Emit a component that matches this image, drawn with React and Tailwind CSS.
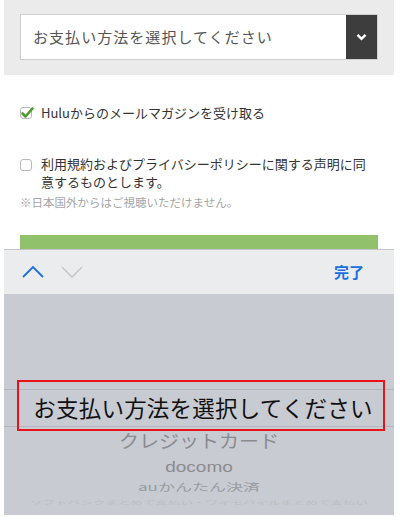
import React from 'react';

const jp = { fontFamily: '"Noto Sans CJK JP", "Noto Sans", sans-serif' };

const Box = ({ checked }) => (
  <div className="relative w-[12px] h-[12px] shrink-0 rounded-[3px] border border-[#b8b8b8] bg-white">
    {checked && (
      <svg className="absolute -left-[1px] -top-[2px]" width="15" height="14" viewBox="0 0 15 14">
        <path d="M2.5 7.5 L5.5 10.5 L12.5 2.5" fill="none" stroke="#4a9a2c" strokeWidth="2.6" strokeLinecap="round" strokeLinejoin="round" />
      </svg>
    )}
  </div>
);

const App = () => {
  return (
    <div className="w-[400px] h-[521px] bg-white overflow-hidden" style={jp}>
      <div className="w-[390px] ml-1">
        {/* select band */}
        <div className="h-[75px] bg-[#ebebeb] pt-[14px] px-4">
          <div className="flex h-[46px] w-[358px] border border-[#cfcfcf] bg-white">
            <div className="flex-1 flex items-center pl-3 text-[15px] tracking-[0.07em] text-[#555]">
              お支払い方法を選択してください
            </div>
            <div className="w-[31px] bg-[#3d3d3d] flex items-center justify-center">
              <svg width="11" height="8" viewBox="0 0 11 8">
                <path d="M1.5 1.8 L5.5 5.8 L9.5 1.8" fill="none" stroke="#fff" strokeWidth="2.4" />
              </svg>
            </div>
          </div>
        </div>

        {/* form */}
        <div className="h-[160px] px-4 pt-[30px]">
          <div className="flex items-center gap-[9px] h-[16px]">
            <Box checked />
            <span className="text-[13px] text-[#333]">Huluからのメールマガジンを受け取る</span>
          </div>
          <div className="flex items-start gap-[9px] mt-[35px]">
            <div className="mt-[3px]"><Box /></div>
            <p className="text-[13px] leading-[18px] text-[#333] -mt-[1px]">
              利用規約およびプライバシーポリシーに関する声明に同<br />意するものとします。
            </p>
          </div>
          <p className="text-[11.5px] text-[#a5a5a5] mt-[3px]">※日本国外からはご視聴いただけません。</p>
        </div>

        <div className="mx-4 h-[14px] bg-[#91c16b]"></div>

        {/* keyboard toolbar */}
        <div className="h-[45px] bg-[#ebeced] border-t border-[#c5c5c5] flex items-center px-[17px]">
          <svg width="24" height="14" viewBox="0 0 24 14">
            <path d="M2 12 L12 2 L22 12" fill="none" stroke="#1a6fe0" strokeWidth="1.8" />
          </svg>
          <svg className="ml-[15px]" width="24" height="14" viewBox="0 0 24 14">
            <path d="M2 2 L12 12 L22 2" fill="none" stroke="#c9c9c9" strokeWidth="1.6" />
          </svg>
          <span className="ml-auto mr-[13px] text-[15px] font-bold text-[#1a6fe0]">完了</span>
        </div>

        {/* picker */}
        <div className="h-[221px] bg-[#c8cbd2] flex flex-col overflow-hidden">
          <div className="h-[95px]"></div>
          <div className="relative h-[38px] border-y border-[#b3b6bc] flex items-center justify-center pl-[8px]">
            <span className="text-[22.5px] text-[#111] tracking-[0.01em]">お支払い方法を選択してください</span>
            <div className="absolute left-[13px] right-[9px] -top-[10px] -bottom-[5px] border-2 border-[#e8141b]"></div>
          </div>
          <div className="flex flex-col items-center text-[#8a8b8f]">
            <span className="text-[20px] leading-[24px] mt-[2px] scale-y-[0.9]">クレジットカード</span>
            <span className="text-[19px] leading-[22px] mt-[3px] scale-y-[0.75]" style={{ fontFamily: '"Liberation Sans", sans-serif' }}>docomo</span>
            <span className="text-[17px] leading-[16px] mt-[1px] scale-y-[0.6] text-[#9a9ca1]">auかんたん決済</span>
            <span className="text-[12.5px] leading-[10px] mt-[2px] scale-y-[0.4] text-[#bcbec3] whitespace-nowrap">ソフトバンクまとめて支払い・ワイモバイルまとめて支払い</span>
          </div>
        </div>
      </div>
    </div>
  );
};

export default App;
